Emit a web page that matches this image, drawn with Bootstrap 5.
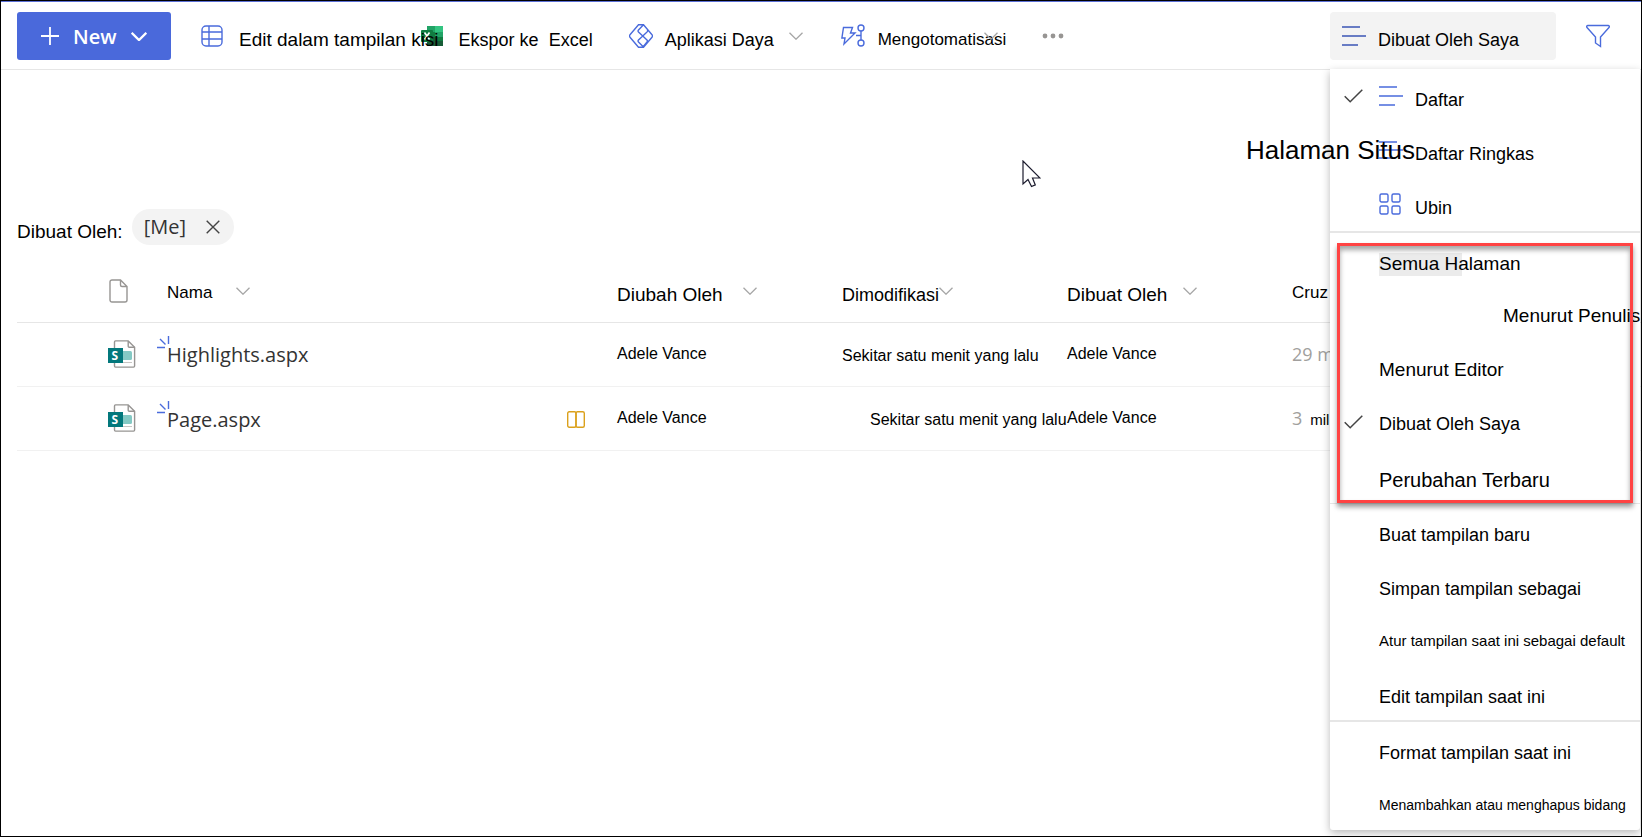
<!DOCTYPE html>
<html lang="id">
<head>
<meta charset="utf-8">
<meta name="viewport" content="width=device-width, initial-scale=1">
<title>Halaman Situs</title>
<link href="https://cdn.jsdelivr.net/npm/bootstrap@5.3.0/dist/css/bootstrap.min.css" rel="stylesheet">
<style>
  :root { --accent: #4a6bdc; --line: #e6e6e6; }
  body { font-family: "Liberation Sans", Arial, sans-serif; font-size: 18px; line-height: 24px; color: #000; background: #fff; }
  .app-frame { border: 1px solid #000; min-height: 100vh; overflow: hidden; }
  .segoe { font-family: "Open Sans", "Noto Sans", sans-serif; color: #333; }
  svg { display: block; flex: none; fill: none; }
  .ico { stroke: var(--accent); stroke-width: 1.4; }
  .chev { stroke: #a6a6a6; stroke-width: 1.3; }
  .t16 { font-size: 16px; } .t17 { font-size: 17px; } .t19 { font-size: 19px; } .t20 { font-size: 20px; }
  .t15 { font-size: 15px; } .t14 { font-size: 14px; }

  .cmd-bar { border-top: 1px solid #5b6fd6; border-bottom: 1px solid var(--line); height: 69px; padding: 10px 31px 9px 16px; }
  .cmd { display: flex; align-items: center; border: 0; background: none; padding: 0; color: #000; white-space: nowrap; }
  .cmd > span { padding-top: 8px; }
  .cmd-new { width: 154px; height: 48px; background: #4a69db; border-radius: 3px; color: #fff; padding: 0 24px; }
  .cmd-new .segoe { color: #fff; font-size: 20px; font-weight: 600; padding: 2px 14px 0; }
  .cmd-view { width: 226px; height: 48px; background: #f3f3f3; border-radius: 4px; padding-left: 12px; }

  .view-menu { top: 68px; right: 1px; width: 310px; background: #fff; box-shadow: 0 3px 8px rgba(0,0,0,.28); border-radius: 0 0 3px 3px; z-index: 2; }
  .view-group + .view-group { border-top: 2px solid var(--line); }
  .view-group.thin { border-top-width: 1px; }
  .view-item { display: flex; align-items: center; width: 100%; height: 54px; border: 0; background: none; padding: 0 0 0 49px; white-space: nowrap; text-align: left; color: #000; }
  .view-item > span { padding-top: 8px; }
  .view-item.raised > span { padding-top: 4px; }
  .view-item.checked { padding-left: 14px; }
  .view-item.checked svg:first-child { margin-right: 16px; }
  .view-item.trailing { padding-left: 173px; }
  .view-icon { margin-right: 12px; }
  .picked { background: linear-gradient(#ebebeb, #ebebeb) 0 100% / 83px 23px no-repeat; }
  .framed::after { content: ""; position: absolute; inset: 10px 7px 0 7px; border: 3px solid #ff4343; box-shadow: 0 4px 5px rgba(0,0,0,.4), inset 0 4px 5px rgba(0,0,0,.35); pointer-events: none; }

  .site-title { font-size: 26px; line-height: 32px; padding: 64px 226px 0 0; z-index: 3; }
  .filter-row { padding: 43px 0 0 16px; gap: 9px; }
  .filter-row > span { padding-top: 10px; }
  .pill { background: #f3f3f3; border-radius: 18px; height: 36px; font-size: 20px; padding: 0 14px 0 12px; gap: 20px; }
  .pill button { border: 0; background: none; padding: 0; }

  .file-list { width: calc(100% - 16px); margin: 15px 0 0 16px; table-layout: fixed; border-collapse: collapse; }
  .file-list th, .file-list td { padding: 0; font-weight: 400; white-space: nowrap; height: 64px; border-bottom: 1px solid #f1f1f1; }
  .file-list th { height: 62px; border-bottom-color: var(--line); }
  .file-list .c-icon { width: 150px; }
  .file-list .c-meta { width: 225px; }
  .file-list .c-last { width: 349px; }
  .file-name { color: #333; font-size: 20px; text-decoration: none; }
  .name-cell { padding-top: 3px; }
  .sparkle { left: -10px; top: -4px; }
  .indent { padding: 3px 0 0 28px; }
  .muted { color: #a19f9d; font-size: 18px; }
  .pointer { left: 1021px; top: 159px; z-index: 4; }
</style>
</head>
<body>
<svg width="0" height="0" class="position-absolute top-0" aria-hidden="true">
  <symbol id="chev" viewBox="0 0 14 8"><path d="M.5.7 7 7.2 13.5.7"/></symbol>
  <symbol id="lines" viewBox="0 0 24 20"><path d="M0 1h18M0 10h24M0 19h16"/></symbol>
  <symbol id="tick" viewBox="0 0 19 14"><path d="M.7 7.2 6.2 12.8 18.3.8"/></symbol>
  <symbol id="spfile" viewBox="0 0 28 28">
    <path d="M7.5.9h12.7l6.4 6.4v18.8a1 1 0 0 1-1 1H7.500a1 1 0 0 1-1-1V1.900a1 1 0 0 1 1-1z" fill="#fff" stroke="#979593" stroke-width="1.400"/>
    <path d="M20.200.9v5.400a1 1 0 0 0 1 1h5.400" stroke="#979593" stroke-width="1.400"/>
    <path d="M15 11h7.500a1.500 1.500 0 0 1 1.500 1.500v6a1.500 1.500 0 0 1-1.500 1.500H15z" fill="#84c9c4"/>
    <path d="M12 22.500h12" stroke="#c8c6c4"/>
    <path d="M0 8h15v15H0z" fill="#03787c"/>
  </symbol>
  <symbol id="spark" viewBox="0 0 14 14"><path d="M0 11.500h8M3 3l5.500 5.500M11.500 0v8"/></symbol>
</svg>

<div class="app-frame position-relative">
  <header class="cmd-bar d-flex align-items-center">
    <button type="button" class="cmd cmd-new">
      <svg width="18" height="18" stroke="#fff" stroke-width="1.800"><path d="M9 0v18M0 9h18"/></svg>
      <b class="segoe">New</b>
      <svg width="16" height="9" stroke="#fff" stroke-width="2"><use href="#chev"/></svg>
    </button>
    <button type="button" class="cmd position-relative z-1 t19" style="margin-left:30px">
      <svg class="ico" width="22" height="22"><rect x="1" y="1" width="20" height="20" rx="4"/><path d="M1 7h20M1 14h20M8 1v20"/></svg>
      <span class="ms-3">Edit dalam tampilan kisi</span>
    </button>
    <button type="button" class="cmd" style="margin-left:-18px">
      <svg width="22" height="21" viewBox="0 0 22 21"><path d="M14 0h8v6h-8z" fill="#33c481"/><path d="M6 0h8v6H6z" fill="#21a366"/><path d="M6 6h8v5H6z" fill="#107c41"/><path d="M14 6h8v5h-8z" fill="#21a366"/><path d="M6 11h16v9H6z" fill="#185c37"/><path d="M14 11h8v4h-8z" fill="#107c41"/><rect y="4" width="12" height="12" rx="1" fill="#107c41"/><path d="m3.500 6.500 5 7m0-7-5 7" stroke="#fff" stroke-width="1.700"/></svg>
      <span class="ms-3">Ekspor ke&nbsp; Excel</span>
    </button>
    <button type="button" class="cmd" style="margin-left:36px">
      <svg class="ico" width="24" height="24"><path d="M9.500.8 1 10.800a1.800 1.800 0 0 0 0 2.400l8.500 10h5L23 13.200a1.800 1.800 0 0 0 0-2.400L14.500.8zM14.500.8 9.500 6a1.500 1.500 0 0 0 0 2l8.500 8a1.500 1.500 0 0 1 0 2l-4 5M18 5.500a1.500 1.500 0 0 1 0 2.500l-8.500 8a1.500 1.500 0 0 0 0 2l5 5"/></svg>
      <span class="ps-1 ms-2">Aplikasi Daya</span>
      <svg class="chev" style="margin-left:15px" width="14" height="8"><use href="#chev"/></svg>
    </button>
    <button type="button" class="cmd t17" style="margin-left:38px">
      <svg class="ico" width="25" height="24"><path d="M2.500 3.500h9l-2 5.500H14L3 20l1-6H.9z"/><circle cx="20" cy="4" r="3"/><circle cx="20" cy="19" r="3"/><path d="M20 7v9M15 11.500h5"/></svg>
      <span class="ps-1 ms-2">Mengotomatisasi</span>
      <svg class="chev" style="margin-left:-22px" width="14" height="8"><use href="#chev"/></svg>
    </button>
    <button type="button" class="cmd" aria-label="Lainnya" style="margin-left:44px">
      <svg width="22" height="6"><g fill="#979593"><circle cx="3" cy="3" r="2.400"/><circle cx="11" cy="3" r="2.400"/><circle cx="19" cy="3" r="2.400"/></g></svg>
    </button>
    <button type="button" class="cmd cmd-view ms-auto">
      <svg width="24" height="20" stroke="#3b55b5" stroke-width="1.600"><use href="#lines"/></svg>
      <span class="ps-1 ms-2">Dibuat Oleh Saya</span>
    </button>
    <button type="button" class="cmd" aria-label="Filter" style="margin-left:30px">
      <svg class="ico" width="24" height="24"><path d="M2 1.500h20a1.200 1.200 0 0 1 1 2L14.500 13v9.500L9.500 19v-6L1 3.500a1.200 1.200 0 0 1 1-2z"/></svg>
    </button>
  </header>

  <div class="view-menu position-absolute" role="menu">
    <div class="view-group">
      <button type="button" class="view-item checked"><svg width="19" height="14" stroke="#444" stroke-width="1.500"><use href="#tick"/></svg><svg class="ico view-icon" width="24" height="20"><use href="#lines"/></svg><span>Daftar</span></button>
      <button type="button" class="view-item"><svg class="ico view-icon" width="24" height="18"><path d="M0 1h18M0 9h24M0 17h16"/></svg><span>Daftar Ringkas</span></button>
      <button type="button" class="view-item"><svg class="ico view-icon" width="24" height="24"><rect x="1" y="2" width="8" height="8" rx="1.500"/><rect x="13" y="2" width="8" height="8" rx="1.500"/><rect x="1" y="14" width="8" height="8" rx="1.500"/><rect x="13" y="14" width="8" height="8" rx="1.500"/></svg><span>Ubin</span></button>
    </div>
    <div class="view-group framed position-relative">
      <button type="button" class="view-item t19"><span class="picked">Semua Halaman</span></button>
      <button type="button" class="view-item trailing raised t19"><span>Menurut Penulis</span></button>
      <button type="button" class="view-item raised t19"><span>Menurut Editor</span></button>
      <button type="button" class="view-item checked raised"><svg width="19" height="14" stroke="#444" stroke-width="1.500"><use href="#tick"/></svg><span>Dibuat Oleh Saya</span></button>
      <button type="button" class="view-item t20"><span>Perubahan Terbaru</span></button>
    </div>
    <div class="view-group thin">
      <button type="button" class="view-item"><span>Buat tampilan baru</span></button>
      <button type="button" class="view-item"><span>Simpan tampilan sebagai</span></button>
      <button type="button" class="view-item raised t15"><span>Atur tampilan saat ini sebagai default</span></button>
      <button type="button" class="view-item"><span>Edit tampilan saat ini</span></button>
    </div>
    <div class="view-group">
      <button type="button" class="view-item"><span>Format tampilan saat ini</span></button>
      <button type="button" class="view-item raised t14"><span>Menambahkan atau menghapus bidang</span></button>
    </div>
  </div>

  <main>
    <h1 class="site-title position-relative text-end fw-normal m-0">Halaman Situs</h1>
    <div class="filter-row d-flex align-items-center">
      <span class="t19">Dibuat Oleh:</span>
      <div class="pill segoe d-flex align-items-center">[Me]
        <button type="button" aria-label="Hapus filter"><svg width="14" height="14" stroke="#444" stroke-width="1.400"><path d="m.7.7 12.600 12.600m0-12.600L.7 13.300"/></svg></button>
      </div>
    </div>

    <table class="file-list">
      <colgroup><col class="c-icon"><col><col class="c-meta"><col class="c-meta"><col class="c-meta"><col class="c-last"></colgroup>
      <thead>
        <tr>
          <th style="padding-left:92px"><svg width="19" height="24" stroke="#979593" stroke-width="1.400"><path d="M3 1h8.500L18 7.500V21a2 2 0 0 1-2 2H3a2 2 0 0 1-2-2V3a2 2 0 0 1 2-2zM11.500 1v5a1.500 1.500 0 0 0 1.500 1.500h5"/></svg></th>
          <th><div class="d-flex align-items-center t17"><span class="pt-1 me-4">Nama</span><svg class="chev" width="14" height="8"><use href="#chev"/></svg></div></th>
          <th><div class="d-flex align-items-center t19"><span class="pt-2 me-3">Diubah Oleh</span><svg class="chev ms-1" width="14" height="8"><use href="#chev"/></svg></div></th>
          <th><div class="d-flex align-items-center"><span class="pt-2">Dimodifikasi</span><svg class="chev" width="14" height="8"><use href="#chev"/></svg></div></th>
          <th><div class="d-flex align-items-center t19"><span class="pt-2 me-3">Dibuat Oleh</span><svg class="chev" width="14" height="8"><use href="#chev"/></svg></div></th>
          <th class="t17"><div class="pt-1">Cruz</div></th>
        </tr>
      </thead>
      <tbody>
        <tr>
          <td style="padding-left:91px"><svg width="28" height="28"><use href="#spfile"/><text x="3.500" y="19.500" font-family="Open Sans" font-weight="700" font-size="12" fill="#fff">S</text></svg></td>
          <td><div class="name-cell position-relative"><svg class="ico sparkle position-absolute" width="14" height="14"><use href="#spark"/></svg><a href="#" class="file-name segoe">Highlights.aspx</a></div></td>
          <td class="t16">Adele Vance</td>
          <td class="t16"><div class="pt-1">Sekitar satu menit yang lalu</div></td>
          <td class="t16">Adele Vance</td>
          <td><div class="segoe muted">29 m</div></td>
        </tr>
        <tr>
          <td style="padding-left:91px"><svg width="28" height="28"><use href="#spfile"/><text x="3.500" y="19.500" font-family="Open Sans" font-weight="700" font-size="12" fill="#fff">S</text></svg></td>
          <td><div class="name-cell position-relative d-flex align-items-center justify-content-between"><svg class="ico sparkle position-absolute" width="14" height="14"><use href="#spark"/></svg><a href="#" class="file-name segoe">Page.aspx</a>
            <svg style="margin-right:32px" width="18" height="17" stroke="#dba11c" stroke-width="1.400"><rect x=".7" y=".7" width="8.300" height="15.600" rx="1.500"/><rect x="9" y=".7" width="8.300" height="15.600" rx="1.500"/></svg></div></td>
          <td class="t16">Adele Vance</td>
          <td class="t16"><div class="indent">Sekitar satu menit yang lalu</div></td>
          <td class="t16">Adele Vance</td>
          <td><div class="d-flex align-items-center"><span class="segoe muted">3</span><span class="t15 pt-1 ps-1 ms-1">mil</span></div></td>
        </tr>
      </tbody>
    </table>
  </main>

  <svg class="pointer position-absolute" width="19" height="28" viewBox="0 0 19 28"><path d="M1 1v23l5-4.500 3.500 7 3.800-1.600L10.500 18H18z" fill="#fff" stroke="#1c1c2e" stroke-width="1.200"/></svg>
</div>
<script src="https://cdn.jsdelivr.net/npm/bootstrap@5.3.0/dist/js/bootstrap.bundle.min.js"></script>
</body>
</html>
